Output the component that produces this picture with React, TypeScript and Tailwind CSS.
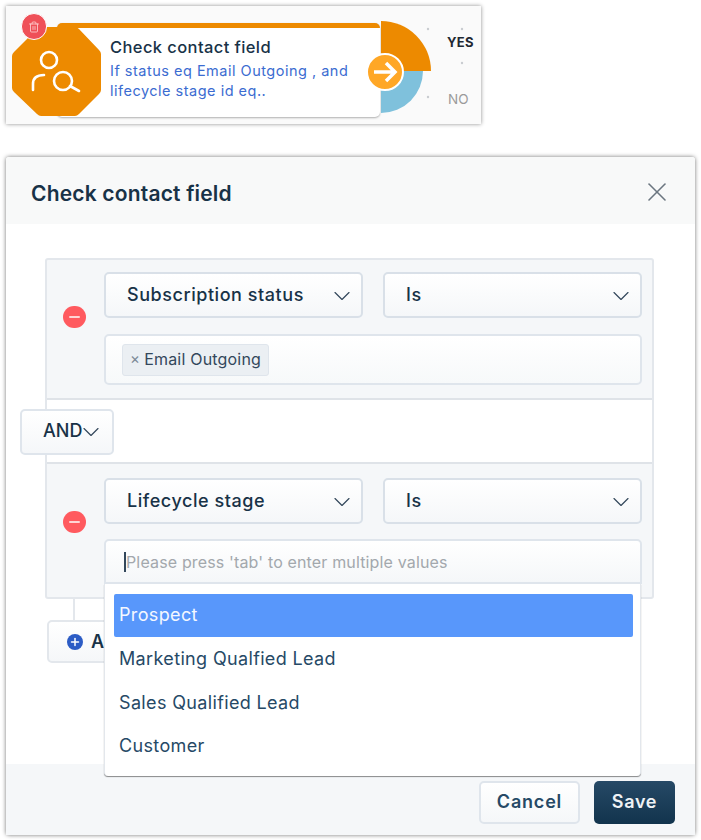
import { ChevronDown, Plus, Trash2, X } from 'lucide-react';

interface SelectBoxProps {
  label: string;
  width: string;
}

// Dropdown trigger used in each condition row
function SelectBox({ label, width }: SelectBoxProps) {
  return (
    <div className={`${width} h-[46px] flex items-center justify-between pl-[21px] pr-[5px] rounded-[5px] border-2 border-[#d9e0e8] bg-linear-to-b from-white to-[#f5f7f9] text-[18px] tracking-[0.55px] font-medium text-[#183247]`}>
      <span className="-mt-[2px]">{label}</span>
      <ChevronDown size={28} strokeWidth={1} className="text-[#33475b] mt-[1px]" />
    </div>
  );
}

function RemoveButton() {
  return (
    <div className="w-[23px] h-[22px] rounded-full bg-[#ff5a5f] flex items-center justify-center">
      <div className="w-[11px] h-[2px] rounded-sm bg-[#ffd5d5]" />
    </div>
  );
}

// Workflow node at the top of the page
function FlowNode() {
  return (
    <div className="relative ml-[6px] mt-[6px] w-[475px] h-[118px] bg-[#fafafa] shadow-[0_0_4px_rgba(0,0,0,0.45)]">
      <div className="absolute left-[51px] top-[17px] w-[323px] h-[94px] rounded-[5px] border-t-[5px] border-[#ed8a00] bg-white shadow-[0_1px_2px_rgba(0,0,0,0.3)] pl-[53px] pt-[8px]">
        <div className="text-[16.5px] leading-[22px] tracking-[0.4px] font-medium text-[#183247]">Check contact field</div>
        <div className="mt-[3px] w-[260px] text-[14.5px] leading-[20px] tracking-[0.5px] text-[#3b6cd1]">
          If status eq Email Outgoing , and lifecycle stage id eq..
        </div>
      </div>

      <svg className="absolute left-0 top-0" width="475" height="118" viewBox="0 0 475 118">
        <path d="M35 21 H69 Q71 21 73 23 L93 44 Q95 46 95 48 V84 Q95 86 93 88 L73 108 Q71 110 69 110 H35 Q33 110 31 108 L8 86 Q6 84 6 82 V50 Q6 48 8 46 L31 23 Q33 21 35 21 Z" fill="#ed8a00" />
        <g fill="none" stroke="#fff" strokeWidth="2.6" strokeLinecap="round">
          <circle cx="43" cy="54" r="8" />
          <path d="M27 84 V78 Q27 69 38 69" />
          <circle cx="57" cy="75" r="9" />
          <path d="M64 80 L73 85" />
        </g>
        <path d="M375 15 A50 50 0 0 1 425 65 H375 Z" fill="#ed8a00" />
        <path d="M375 65 H417 A42 42 0 0 1 375 107 Z" fill="#7fc1dc" />
        <circle cx="379" cy="66" r="18" fill="#ffa726" stroke="#fff" strokeWidth="2" />
        <path d="M368 66 H388 M380 57 L389 66 L380 75" fill="none" stroke="#fff" strokeWidth="3.5" />
        <g fill="#c9ccd0">
          <circle cx="422" cy="23" r="1.2" />
          <circle cx="456" cy="23" r="1.2" />
          <circle cx="456" cy="57" r="1.2" />
          <circle cx="422" cy="91" r="1.2" />
        </g>
      </svg>

      <div className="absolute left-[15px] top-[7px] w-[26px] h-[27px] rounded-full bg-[#ef5058] border border-white flex items-center justify-center">
        <Trash2 size={12} strokeWidth={1.6} className="text-[#ffd5d5]" />
      </div>
      <span className="absolute left-[441px] top-[28px] text-[13px] leading-4 tracking-[0.3px] font-bold text-[#1f2933]">YES</span>
      <span className="absolute left-[442px] top-[85px] text-[13.5px] leading-4 text-[#9a9a9a]">NO</span>
    </div>
  );
}

export default function App() {
  const options = ['Marketing Qualfied Lead', 'Sales Qualified Lead', 'Customer'];

  return (
    <div className="w-[701px] h-[840px] bg-white overflow-hidden font-['Inter',sans-serif]">
      <FlowNode />

      {/* Modal */}
      <div className="ml-[6px] mt-[33px] w-[689px] h-[678px] flex flex-col rounded-[3px] bg-white shadow-[0_0_4px_rgba(0,0,0,0.55)]">
        <div className="h-[67px] shrink-0 bg-[#f8f9f9] flex items-center justify-between pl-[25px] pr-[22px] rounded-t-[3px]">
          <h1 className="mt-[7px] text-[21px] tracking-[0.18px] font-semibold text-[#183247]">Check contact field</h1>
          <X size={32} strokeWidth={1.2} className="text-[#6b7680] mt-[3px]" />
        </div>

        <div className="flex-1 pt-[34px] pl-[39px]">
          <div className="relative w-[609px]">
            <div className="rounded-[3px] border-2 border-[#e3e7ec] bg-[#f5f7f9]">
              {/* First condition */}
              <div className="h-[140px] flex pl-[16px] border-b-2 border-[#dfe3e8]">
                <div className="pt-[46px]"><RemoveButton /></div>
                <div className="ml-[18px] pt-[12px] flex flex-col gap-[16px]">
                  <div className="flex gap-[20px]">
                    <SelectBox label="Subscription status" width="w-[259px]" />
                    <SelectBox label="Is" width="w-[259px]" />
                  </div>
                  <div className="w-[538px] h-[51px] flex items-center pl-[16px] rounded-[5px] border-2 border-[#dfe5ec] bg-linear-to-b from-white to-[#f7f9fa]">
                    <div className="h-[32px] flex items-center gap-[4px] px-[7px] pb-[1px] rounded-[3px] border border-[#dfe5ec] bg-[#ebeff3] text-[16px] tracking-[0.2px] text-[#33475b]">
                      <span className="text-[#7b8a97] text-[15px]">×</span>
                      <span>Email Outgoing</span>
                    </div>
                  </div>
                </div>
              </div>

              {/* AND row */}
              <div className="h-[64px] bg-white border-b-2 border-[#dfe3e8] flex items-center">
                <div className="-ml-[27px] mt-[2px] w-[94px] h-[46px] flex items-center pl-[21px] rounded-[5px] border-2 border-[#dfe5ec] bg-linear-to-b from-white to-[#f5f7f9] text-[18px] font-medium text-[#183247]">
                  <span className="-mt-[3px]">AND</span>
                  <ChevronDown size={28} strokeWidth={1} className="text-[#33475b] -ml-[5px] shrink-0" />
                </div>
              </div>

              {/* Second condition */}
              <div className="h-[133px] flex pl-[16px]">
                <div className="pt-[47px]"><RemoveButton /></div>
                <div className="ml-[18px] pt-[14px] flex flex-col gap-[15px]">
                  <div className="flex gap-[20px]">
                    <SelectBox label="Lifecycle stage" width="w-[259px]" />
                    <SelectBox label="Is" width="w-[259px]" />
                  </div>
                  <div className="w-[538px] h-[45px] flex items-center pl-[18px] rounded-t-[5px] border-2 border-[#dfe5ec] bg-linear-to-b from-white to-[#f5f7f9] text-[16px] tracking-[0.15px] text-[#a3a8ad]">
                    <span className="w-[2px] h-[20px] bg-[#33475b]" />
                    Please press 'tab' to enter multiple values
                  </div>
                </div>
              </div>
            </div>

            {/* Add condition button, mostly covered by the open menu */}
            <div className="ml-[28px] w-[2px] h-[21px] bg-[#e3e7ec]" />
            <div className="ml-[2px] w-[90px] h-[43px] flex items-center gap-[8px] pl-[18px] rounded-[5px] border-2 border-[#e3e7ec] bg-linear-to-b from-white to-[#f5f7f9] text-[18px] font-semibold text-[#183247]">
              <span className="w-[16px] h-[16px] rounded-full bg-[#2c5cc5] flex items-center justify-center">
                <Plus size={12} strokeWidth={3} className="text-white" />
              </span>
              Add
            </div>

            {/* Open dropdown menu */}
            <div className="absolute left-[59px] top-[326px] w-[537px] h-[192px] bg-white rounded-b-[4px] border-x border-[#e3e7ec] shadow-[0_1px_1px_rgba(0,0,0,0.45)] pl-[9px] pr-[7px] pt-[10px] text-[18px] tracking-[0.35px]">
              <div className="h-[43px] flex items-center pl-[5px] pb-[2px] rounded-[2px] bg-[#5897fb] text-[#f4f8ff]">Prospect</div>
              {options.map(o => (
                <div key={o} className="h-[43.5px] flex items-center pl-[5px] text-[#264966]">{o}</div>
              ))}
            </div>
          </div>
        </div>

        <div className="h-[71px] shrink-0 bg-[#f5f7f9] flex items-start justify-end gap-[14px] pt-[17px] pr-[20px]">
          <div className="w-[101px] h-[43px] flex items-center justify-center pb-[2px] rounded-[5px] border-2 border-[#dfe5ec] bg-linear-to-b from-white to-[#f5f7f9] text-[18px] tracking-[0.8px] font-semibold text-[#264966]">Cancel</div>
          <div className="w-[81px] h-[43px] flex items-center justify-center pb-[2px] rounded-[5px] bg-linear-to-b from-[#264966] to-[#12344d] text-[18px] tracking-[0.7px] font-semibold text-[#eef2f5]">Save</div>
        </div>
      </div>
    </div>
  );
}
